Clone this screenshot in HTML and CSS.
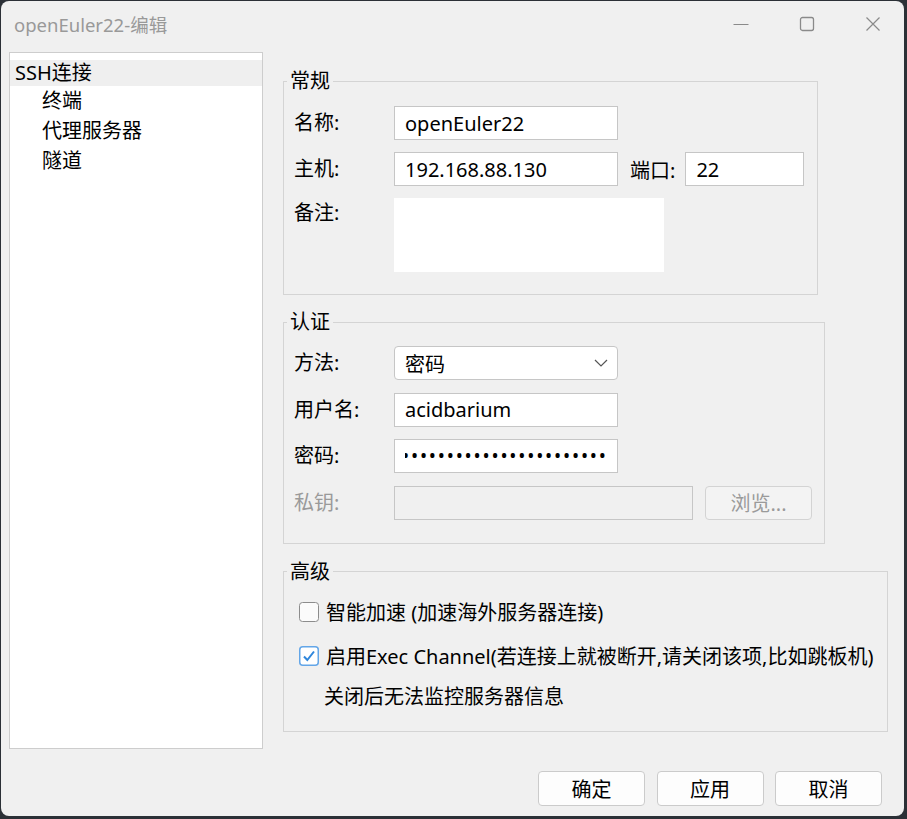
FILE: index.html
```html
<!DOCTYPE html>
<html lang="zh-CN">
<head>
  <meta charset="UTF-8">
  <meta name="viewport" content="width=device-width, initial-scale=1.0">
  <title>openEuler22-编辑</title>
  <link rel="stylesheet" href="styles.css">
</head>
<body>

  <div class="window">
    <!-- 标题栏 -->
    <div class="titlebar">
      <span class="title">openEuler22-编辑</span>
      <div class="controls">
        <span class="ctrl">
          <svg width="16" height="16" viewBox="0 0 16 16"><path d="M0.5 8.5h15" stroke="#8a8a8a" stroke-width="1.2" fill="none"/></svg>
        </span>
        <span class="ctrl">
          <svg width="16" height="16" viewBox="0 0 16 16"><rect x="1.5" y="1.5" width="13" height="13" rx="2" stroke="#8a8a8a" stroke-width="1.3" fill="none"/></svg>
        </span>
        <span class="ctrl">
          <svg width="16" height="16" viewBox="0 0 16 16"><path d="M1.5 1.5l13 13M14.5 1.5l-13 13" stroke="#8a8a8a" stroke-width="1.2" fill="none"/></svg>
        </span>
      </div>
    </div>

    <div class="main">
      <!-- 左侧树 -->
      <ul class="tree">
        <li class="selected">SSH连接</li>
        <li>终端</li>
        <li>代理服务器</li>
        <li>隧道</li>
      </ul>

      <div class="pane">
        <fieldset class="group general">
          <legend>常规</legend>
          <div class="row">
            <label class="lbl">名称:</label>
            <input class="field" type="text" value="openEuler22">
          </div>
          <div class="row">
            <label class="lbl">主机:</label>
            <input class="field" type="text" value="192.168.88.130">
            <label class="port-lbl">端口:</label>
            <input class="field port" type="text" value="22">
          </div>
          <div class="row top">
            <label class="lbl">备注:</label>
            <textarea class="note"></textarea>
          </div>
        </fieldset>

        <fieldset class="group auth">
          <legend>认证</legend>
          <div class="row">
            <label class="lbl">方法:</label>
            <div class="field select">
              <span>密码</span>
              <svg width="14" height="8" viewBox="0 0 14 8"><path d="M1 1l6 6 6-6" stroke="#555" stroke-width="1.2" fill="none"/></svg>
            </div>
          </div>
          <div class="row">
            <label class="lbl">用户名:</label>
            <input class="field" type="text" value="acidbarium">
          </div>
          <div class="row">
            <label class="lbl">密码:</label>
            <div class="field password"><span class="dots">•••••••••••••••••••••••</span></div>
          </div>
          <div class="row">
            <label class="lbl disabled">私钥:</label>
            <div class="field keyfile"></div>
            <button class="btn browse" disabled>浏览...</button>
          </div>
        </fieldset>

        <fieldset class="group advanced">
          <legend>高级</legend>
          <div class="check-row">
            <svg class="box" width="20" height="20" viewBox="0 0 20 20"><rect x="0.5" y="0.5" width="19" height="19" rx="3" fill="#fbfbfb" stroke="#8c8c8c"/></svg>
            <span>智能加速 (加速海外服务器连接)</span>
          </div>
          <div class="check-row second">
            <svg class="box" width="20" height="20" viewBox="0 0 20 20"><rect x="0.75" y="0.75" width="18.5" height="18.5" rx="3" fill="#fff" stroke="#63a6e8" stroke-width="1.5"/><path d="M5 10.5l3.3 3.5L15 5.5" stroke="#2f86dc" stroke-width="2" fill="none"/></svg>
            <span>启用Exec Channel(若连接上就被断开,请关闭该项,比如跳板机)</span>
          </div>
          <div class="hint">关闭后无法监控服务器信息</div>
        </fieldset>
      </div>
    </div>

    <!-- 底部按钮 -->
    <div class="footer">
      <button class="btn">确定</button>
      <button class="btn">应用</button>
      <button class="btn">取消</button>
    </div>
  </div>

</body>
</html>
```

FILE: styles.css
```css
body {
  margin: 0;
  background: #2b3036;
  font-family: "Noto Sans", "Noto Sans CJK SC", sans-serif;
  font-size: 20px;
  color: #000;
}

.window {
  margin: 1px 0 0 1px;
  width: 903px;
  height: 815px;
  background: #f0f0f0;
  border-radius: 8px;
  display: flex;
  flex-direction: column;
  overflow: hidden;
}

/* 标题栏 */
.titlebar {
  height: 45px;
  flex-shrink: 0;
  display: flex;
  align-items: center;
  justify-content: space-between;
}

.title {
  padding-left: 13px;
  font-size: 18.5px;
  color: #999;
}

.controls {
  display: flex;
  height: 100%;
  margin-right: -2px;
}

.ctrl {
  width: 66px;
  display: flex;
  align-items: center;
  justify-content: center;
}

/* 主体 */
.main {
  flex: 1;
  min-height: 0;
  display: flex;
  padding: 6px 0 0 8px;
}

.tree {
  width: 254px;
  box-sizing: border-box;
  margin: 0;
  padding: 7px 0 0;
  list-style: none;
  background: #fff;
  border: 1px solid #cdcdcd;
}

.tree li {
  height: 30px;
  line-height: 30px;
  padding-left: 32px;
}

.tree li.selected {
  height: 26px;
  line-height: 26px;
  padding-left: 5px;
  background: #efefef;
}

.pane {
  padding: 19px 0 0 20px;
}

.group {
  box-sizing: border-box;
  margin: 0;
  border: 1px solid #d4d4d4;
  padding: 15px 12px 22px 15px;
}

.group legend {
  margin-left: -12px;
  padding: 0 3px;
  line-height: 20px;
}

.general {
  width: 535px;
  padding-left: 10px;
}

.general legend {
  margin-left: -7px;
}

.auth {
  width: 542px;
  margin-top: 17px;
  padding: 14px 11px 23px 10px;
}

.auth legend {
  margin-left: -7px;
}

.advanced {
  width: 605px;
  margin-top: 18px;
  padding-bottom: 19px;
}

.row {
  display: flex;
  align-items: center;
}

.row + .row {
  margin-top: 12px;
}

.auth .row + .row {
  margin-top: 12.5px;
}

.row.top {
  align-items: flex-start;
}

.lbl {
  width: 100px;
  flex-shrink: 0;
  line-height: 30px;
}

.lbl.disabled {
  color: #9a9a9a;
}

.field {
  box-sizing: border-box;
  width: 224px;
  height: 34px;
  margin: 0;
  padding: 0 10px;
  border: 1px solid #c6c6c6;
  background: #fff;
  font: inherit;
  color: #000;
  outline: none;
}

.port-lbl {
  margin: 0 10px 0 12px;
}

.field.port {
  width: 119px;
}

.note {
  width: 270px;
  height: 74px;
  border: none;
  margin: 0;
  padding: 0;
  background: #fff;
  resize: none;
  font: inherit;
}

.select {
  display: flex;
  align-items: center;
  justify-content: space-between;
  border-radius: 4px;
  padding-right: 9px;
}

.password {
  display: flex;
  align-items: center;
}

.dots {
  display: block;
  overflow: hidden;
  white-space: nowrap;
  text-indent: -3px;
  letter-spacing: 1.8px;
  font-size: 19px;
}

.keyfile {
  width: 299px;
  background: #f0f0f0;
}

.btn {
  box-sizing: border-box;
  width: 107px;
  height: 35px;
  margin: 0;
  padding: 0;
  border: 1px solid #cbcbcb;
  border-radius: 4px;
  background: #fdfdfd;
  font: inherit;
  color: #000;
}

.browse {
  height: 34px;
  margin-left: 12px;
  background: #f3f3f3;
  border-color: #d3d3d3;
  color: #9a9a9a;
}

/* 高级 */
.check-row {
  height: 30px;
  display: flex;
  align-items: center;
  gap: 7px;
}

.check-row.second {
  margin-top: 14px;
}

.hint {
  height: 30px;
  line-height: 30px;
  margin-top: 11px;
  padding-left: 25px;
}

/* 底部 */
.footer {
  flex-shrink: 0;
  display: flex;
  justify-content: flex-end;
  gap: 11.5px;
  padding: 22px 22px 10px;
}
```
